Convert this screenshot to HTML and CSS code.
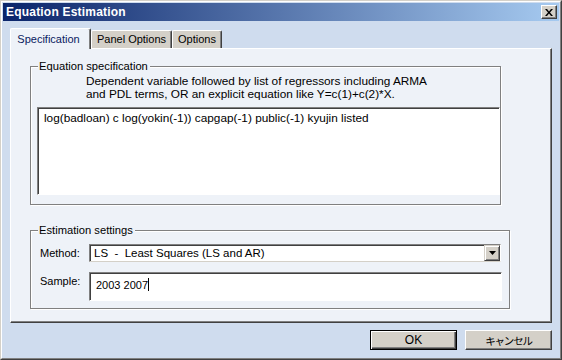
FILE: index.html
```html
<!DOCTYPE html>
<html lang="ja">
<head>
  <meta charset="UTF-8" />
  <title>Equation Estimation</title>
  <link rel="stylesheet" href="styles.css">
</head>
<body>
  <div class="window">
    <div class="frame">
      <div class="titlebar">
        <span class="title">Equation Estimation</span>
        <button class="close" aria-label="close">
          <svg width="8" height="7" viewBox="0 0 8 7"><path d="M0 0h2l2 2.5L6 0h2L5 3.5 8 7H6L4 4.5 2 7H0l3-3.5z" fill="#000"/></svg>
        </button>
      </div>

      <div class="body">
        <div class="tabs">
          <div class="tab active spec">Specification</div>
          <div class="tab panelopt">Panel Options</div>
          <div class="tab opts">Options</div>
        </div>

        <div class="panel">
          <div class="group eq">
            <span class="group-title">Equation specification</span>
            <p class="hint">Dependent variable followed by list of regressors including ARMA<br>and PDL terms, OR an explicit equation like Y=c(1)+c(2)*X.</p>
            <div class="edit eq-edit">log(badloan) c log(yokin(-1)) capgap(-1) public(-1) kyujin listed</div>
          </div>

          <div class="group est">
            <span class="group-title">Estimation settings</span>
            <div class="row method-row">
              <label class="lbl">Method:</label>
              <div class="combo">
                <span class="combo-text">LS&nbsp; -&nbsp; Least Squares (LS and AR)</span>
                <span class="drop">
                  <svg width="7" height="4" viewBox="0 0 7 4"><path d="M0 0h7L3.5 4z" fill="#000"/></svg>
                </span>
              </div>
            </div>
            <div class="row sample-row">
              <label class="lbl">Sample:</label>
              <div class="edit sample">2003 2007<span class="caret"></span></div>
            </div>
          </div>
        </div>

        <div class="actions">
          <button class="btn ok">OK</button>
          <button class="btn cancel">キャンセル</button>
        </div>
      </div>
    </div>
  </div>
</body>
</html>
```

FILE: styles.css
```css
* { margin:0; padding:0; box-sizing:border-box }
html, body { width:562px; height:360px; overflow:hidden }
body {
  font-family:"Liberation Sans", Arial, sans-serif;
  font-size:11px; color:#000;
  background:#cfdcee;
}

/* window frame */
.window {
  width:562px; height:360px;
  border:1px solid; border-color:#d4d0c8 #404040 #404040 #d4d0c8;
}
.frame {
  height:100%;
  border:1px solid; border-color:#fff #808080 #808080 #fff;
  padding:1px;
  background:#cfdcee;
}

.titlebar {
  height:18px;
  display:flex; align-items:center; justify-content:space-between;
  background:linear-gradient(90deg,#0a246a,#a6caf0);
  padding:0 2px 0 3px;
}
.title { color:#fff; font-weight:bold; font-size:12px; letter-spacing:.2px }
.close {
  width:16px; height:14px;
  display:flex; align-items:center; justify-content:center;
  background:#d4d0c8;
  border:1px solid; border-color:#fff #404040 #404040 #fff;
  box-shadow:inset -1px -1px 0 #808080;
}

.body { padding:7px 7px 0 7px }

/* tabs */
.tabs { display:flex; align-items:flex-end; height:20px; position:relative; z-index:2 }
.tab {
  height:18px; line-height:17px; text-align:center;
  background:#d4d0c8;
  border-top:1px solid #fff; border-left:1px solid #fff;
  border-right:1px solid #404040;
  box-shadow:inset -1px 0 0 #808080;
  border-radius:2px 2px 0 0;
}
.tab.active {
  height:21px; line-height:20px; margin-bottom:-1px;
  background:#eef2f8; color:#0a1a60;
  padding-right:4px;
}
.spec { width:81px }
.panelopt { width:81px }
.opts { width:50px }

.panel {
  width:542px; height:275px;
  background:#eef2f8;
  border-top:1px solid #fff; border-left:1px solid #fff;
  border-right:1px solid #404040; border-bottom:1px solid #404040;
  box-shadow:inset -1px -1px 0 #808080;
  padding:17px 0 0 19px;
}

/* group boxes */
.group {
  position:relative;
  border:1px solid #808080;
  box-shadow:1px 1px 0 #fff, inset 1px 1px 0 #fff;
}
.group-title {
  position:absolute; left:7px; top:-7px;
  padding:0 2px 0 1px; line-height:12px;
  background:#eef2f8; font-size:11.2px;
}
.eq { width:471px; height:139px }
.est { width:480px; height:79px; margin-top:25px; padding:13px 0 0 9px }

.hint { margin:8px 0 0 55px; line-height:13px; font-size:11.8px }

.edit {
  background:#fff;
  border-top:1px solid #808080; border-left:1px solid #808080;
  border-right:1px solid #fff; border-bottom:1px solid #fff;
  box-shadow:inset 1px 1px 0 #404040;
}
.eq-edit {
  width:463px; height:88px;
  margin:6px 0 0 6px;
  padding:3px 6px; font-size:11.8px;
}

.row { display:flex }
.sample-row { margin-top:10px }
.lbl { width:49px; font-size:11px }
.method-row .lbl { line-height:18px }
.sample-row .lbl { padding-top:3px }

.combo {
  width:412px; height:18px;
  display:flex; align-items:center; justify-content:space-between;
  background:#fff;
  border-top:1px solid #808080; border-left:1px solid #808080;
  border-right:1px solid #fff; border-bottom:1px solid #d4d0c8;
  box-shadow:inset 1px 1px 0 #404040;
  padding-left:4px; font-size:11.5px;
}
.drop {
  width:16px; height:16px;
  display:flex; align-items:center; justify-content:center;
  background:#d4d0c8;
  border:1px solid; border-color:#d4d0c8 #404040 #404040 #d4d0c8;
  box-shadow:inset 1px 1px 0 #fff, inset -1px -1px 0 #808080;
}
.sample {
  width:413px; height:29px;
  padding:5px 6px;
}
.caret { display:inline-block; width:1px; height:13px; background:#000; vertical-align:-2px }

/* buttons */
.actions { display:flex; justify-content:flex-end; gap:8px; margin-top:7px }
.btn {
  width:87px; height:20px;
  font-family:"Liberation Sans", "Noto Sans CJK JP", sans-serif; font-size:12px;
  background:#d4d0c8;
  border:1px solid; border-color:#fff #404040 #404040 #fff;
  box-shadow:inset -1px -1px 0 #808080;
}
.btn.ok {
  border:1px solid #000;
  box-shadow:inset 1px 1px 0 #fff, inset -1px -1px 0 #404040, inset -2px -2px 0 #808080;
}
.btn.cancel { font-size:10.5px; letter-spacing:-1.2px }
```
